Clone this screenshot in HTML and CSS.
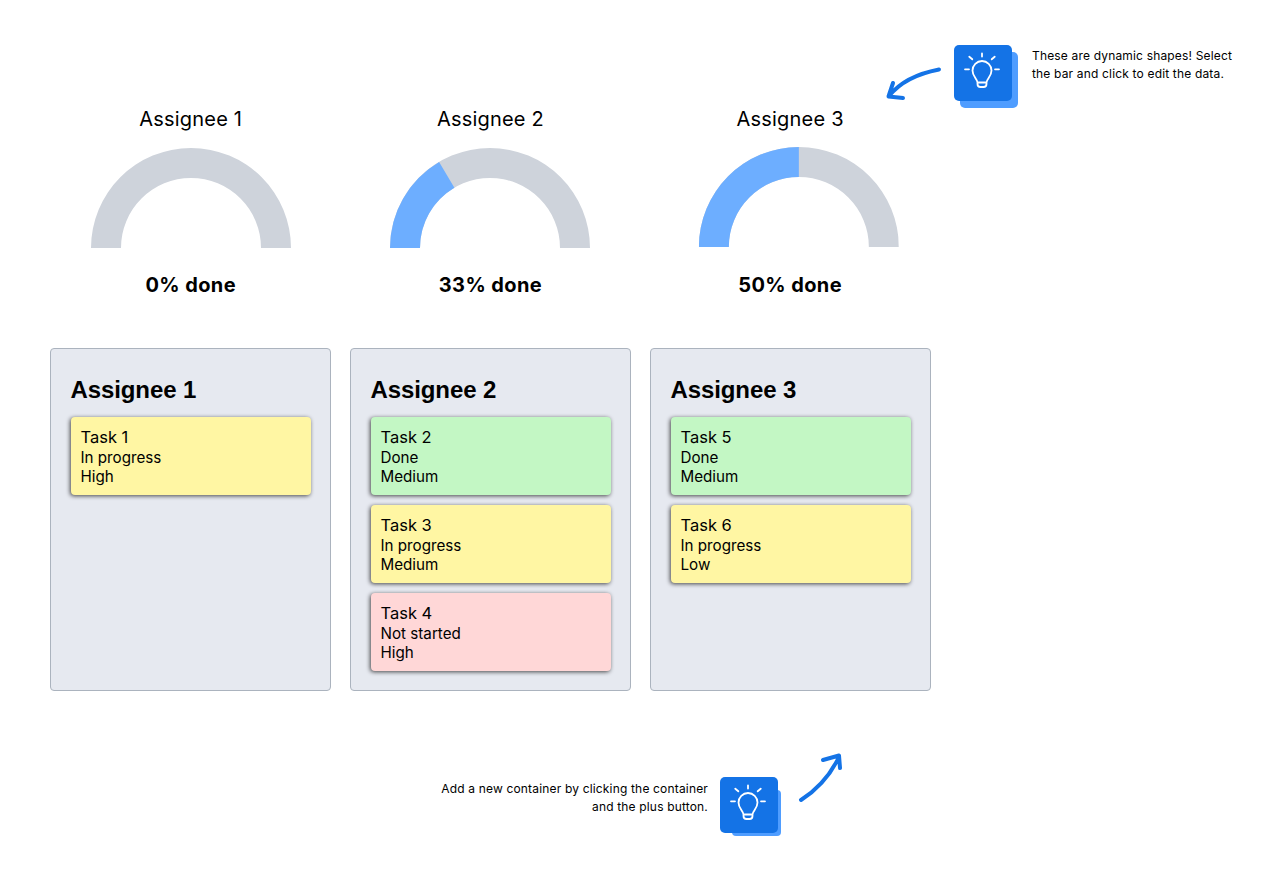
FILE: index.html
```html
<!DOCTYPE html>
<html lang="en">
<head>
<meta charset="utf-8">
<title>Task board</title>
<link rel="stylesheet" href="styles.css">
</head>
<body>
<main class="canvas">
  <section class="gauges">
    <figure class="gauge">
      <figcaption class="gauge-name">Assignee 1</figcaption>
      <svg class="arc" width="200" height="100" viewBox="0 0 200 100"><path class="arc-bg" d="M0 100A100 100 0 0 1 200 100H170A70 70 0 0 0 30 100Z"/></svg>
      <p class="gauge-value">0% done</p>
    </figure>
    <figure class="gauge">
      <figcaption class="gauge-name">Assignee 2</figcaption>
      <svg class="arc" width="200" height="100" viewBox="0 0 200 100"><path class="arc-bg" d="M0 100A100 100 0 0 1 200 100H170A70 70 0 0 0 30 100Z"/><path class="arc-fill" d="M0 100A100 100 0 0 1 49.1 13.9L64.4 39.7A70 70 0 0 0 30 100Z"/></svg>
      <p class="gauge-value">33% done</p>
    </figure>
    <figure class="gauge gauge-last">
      <figcaption class="gauge-name">Assignee 3</figcaption>
      <svg class="arc arc-shift" width="200" height="100" viewBox="0 0 200 100"><path class="arc-bg" d="M0 100A100 100 0 0 1 200 100H170A70 70 0 0 0 30 100Z"/><path class="arc-fill" d="M0 100A100 100 0 0 1 100 0V30A70 70 0 0 0 30 100Z"/></svg>
      <p class="gauge-value">50% done</p>
    </figure>
  </section>

  <section class="board">
    <article class="column">
      <h2 class="column-title">Assignee 1</h2>
      <div class="card yellow">Task 1<br>In progress<br>High</div>
    </article>
    <article class="column">
      <h2 class="column-title">Assignee 2</h2>
      <div class="card green">Task 2<br>Done<br>Medium</div>
      <div class="card yellow">Task 3<br>In progress<br>Medium</div>
      <div class="card red">Task 4<br>Not started<br>High</div>
    </article>
    <article class="column">
      <h2 class="column-title">Assignee 3</h2>
      <div class="card green">Task 5<br>Done<br>Medium</div>
      <div class="card yellow">Task 6<br>In progress<br>Low</div>
    </article>
  </section>
</main>

<aside class="tip tip-top">
  <svg class="tip-arrow" width="60" height="40" viewBox="0 0 60 40"><path d="M54 4.500Q20 11 4 31M8 18L3.500 31.500L18 33"/></svg>
  <div class="bulb-box">
    <svg class="bulb" width="58" height="56" viewBox="0 0 58 56"><path d="M28 8.500V11.500M15.300 11.700L18.300 14.300M40.700 11.700L37.700 14.300M11 24.300H15M41 24.300H45M23.500 37.500C23 33.500 18.500 31.500 18.500 25.500A9.500 9.500 0 0 1 37.500 25.500C37.500 31.500 33 33.500 32.500 37.500ZM23.500 37.500V39A3 3 0 0 0 26.500 42H29.500A3 3 0 0 0 32.500 39V37.500"/></svg>
  </div>
  <p class="tip-text">These are dynamic shapes! Select<br>the bar and click to edit the data.</p>
</aside>

<aside class="tip tip-bottom">
  <p class="tip-text tip-right">Add a new container by clicking the container<br>and the plus button.</p>
  <div class="bulb-box bulb-box-small">
    <svg class="bulb" width="58" height="56" viewBox="0 0 58 56"><path d="M28 8.500V11.500M15.300 11.700L18.300 14.300M40.700 11.700L37.700 14.300M11 24.300H15M41 24.300H45M23.500 37.500C23 33.500 18.500 31.500 18.500 25.500A9.500 9.500 0 0 1 37.500 25.500C37.500 31.500 33 33.500 32.500 37.500ZM23.500 37.500V39A3 3 0 0 0 26.500 42H29.500A3 3 0 0 0 32.500 39V37.500"/></svg>
  </div>
  <svg class="tip-arrow tip-arrow-up" width="50" height="54" viewBox="0 0 50 54"><path d="M5 49Q30 33 43 6M27 9L43 4.500L44 17"/></svg>
</aside>
</body>
</html>
```

FILE: styles.css
```css
* { box-sizing: border-box; }

html, body {
  margin: 0;
  height: 100%;
  background: #fff;
  color: #000;
  font-family: Inter, "Liberation Sans", sans-serif;
}

body { position: relative; overflow: hidden; }

.canvas {
  width: 931px;
  margin-left: 50.500px;
  padding-top: 107px;
  display: flex;
  flex-direction: column;
  gap: 51px;
}

.gauges, .board { display: grid; }

.gauges {
  grid-template-columns: repeat(3, 280.500px);
  column-gap: 19.200px;
}

.board {
  margin-left: -.500px;
  grid-template-columns: repeat(3, 281px);
  column-gap: 19px;
}

.gauge {
  margin: 0;
  display: flex;
  flex-direction: column;
  align-items: center;
}

.gauge-name {
  font-size: 20px;
  line-height: 24px;
  letter-spacing: .2px;
  margin-bottom: 17px;
}

.gauge-last .gauge-name { margin-bottom: 16px; }

.arc { display: block; }
.arc-shift { transform: translateX(8.850px); }
.arc-bg { fill: #ced3db; }
.arc-fill { fill: #6daeff; }

.gauge-value {
  margin: 25px 0 0;
  font-size: 20px;
  line-height: 24px;
  font-weight: 700;
  letter-spacing: .4px;
  transform: translateY(-.500px);
}

.gauge-last .gauge-value { margin-top: 26px; }

.column {
  height: 343px;
  background: #e6e9f0;
  border: 1px solid #abb3be;
  border-radius: 4px;
  padding: 26px 19.500px 0;
  display: flex;
  flex-direction: column;
  gap: 10px;
}

.column-title {
  margin: 0 0 3px;
  font-size: 24px;
  line-height: 29px;
  font-family: "Liberation Sans", sans-serif;
  font-weight: 700;
  letter-spacing: -.1px;
}

.card {
  height: 78px;
  padding: 11.300px 10px 0;
  border-radius: 4px;
  font-size: 15.200px;
  line-height: 19.400px;
  box-shadow: -1px 1px 4px rgba(0, 0, 0, .7);
}

.card::first-line { font-size: 16.500px; }

.yellow { background: #fff6a3; }
.green { background: #c3f7c4; }
.red { background: #ffd7d7; }

.tip { position: absolute; }
.tip-top { left: 885px; top: 45px; width: 360px; }
.tip-bottom { left: 430px; top: 750px; width: 430px; }

.bulb-box {
  position: absolute;
  width: 58px;
  height: 56px;
  background: #1473e6;
  border-radius: 5px;
}

.tip-top .bulb-box { left: 69px; top: 0; box-shadow: 6px 7px 0 #4f9dff; }
.tip-bottom .bulb-box { left: 290px; top: 27px; }

.tip-bottom::before {
  content: "";
  position: absolute;
  left: 302px;
  top: 40px;
  width: 49px;
  height: 46px;
  background: #4f9dff;
  border-radius: 4px;
}

.bulb { display: block; }
.bulb path {
  fill: none;
  stroke: #fff;
  stroke-width: 1.800;
  stroke-linecap: round;
  stroke-linejoin: round;
}

.tip-arrow { position: absolute; }
.tip-arrow path {
  fill: none;
  stroke: #1473e6;
  stroke-width: 4;
  stroke-linecap: round;
  stroke-linejoin: round;
}

.tip-top .tip-arrow { left: 0; top: 20px; }
.tip-arrow-up { left: 366px; top: 1px; }

.tip-text {
  position: absolute;
  margin: 0;
  font-size: 12px;
  line-height: 18px;
  letter-spacing: .17px;
  white-space: nowrap;
}

.tip-top .tip-text { left: 147px; top: 2px; }
.tip-bottom .tip-text { right: 152px; top: 30px; }
.tip-right { text-align: right; }
```
